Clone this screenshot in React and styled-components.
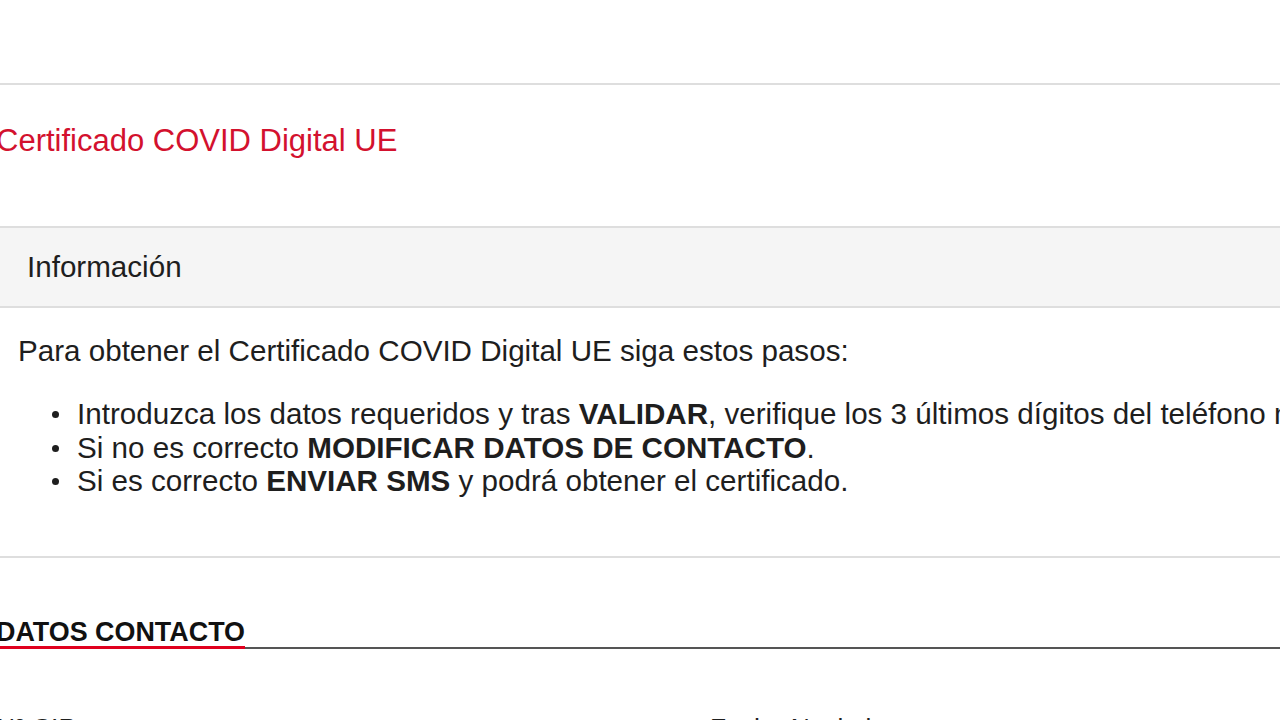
import React from "react";
import styled, { createGlobalStyle } from "styled-components";

const Global = createGlobalStyle`
  html, body { margin: 0; padding: 0; background: #fff; overflow: hidden; }
  body { font-family: "Liberation Sans", Arial, Helvetica, sans-serif; color: #222; }
  * { box-sizing: border-box; }
`;

const Page = styled.div`
  width: 1320px;
  margin-left: -4px;
`;

const TopBar = styled.header`
  height: 85px;
  border-bottom: 2px solid #dedede;
`;

const Title = styled.h1`
  margin: 40px 0 0;
  font-size: 31px;
  line-height: 31px;
  font-weight: 400;
  color: #d3112e;
`;

const Panel = styled.section`
  margin-top: 70px;
  border-top: 2px solid #dedede;
  border-bottom: 2px solid #dedede;
`;

const PanelHeader = styled.div`
  height: 80px;
  display: flex;
  align-items: center;
  padding-left: 31px;
  background: #f5f5f5;
  border-bottom: 2px solid #dedede;
  font-size: 29.6px;
  color: #1e1e1e;
`;

const PanelBody = styled.div`
  padding: 26px 0 58px 22px;
  font-size: 29.6px;
  color: #1e1e1e;
`;

const Lead = styled.p`
  margin: 0;
  line-height: 34px;
`;

const Steps = styled.ul`
  list-style: none;
  margin: 29px 0 0;
  padding: 0 0 0 34px;
`;

const Step = styled.li`
  display: grid;
  grid-template-columns: 25px 1fr;
  align-items: center;
  line-height: 33.5px;
  white-space: nowrap;
`;

const Dot = styled.span`
  width: 7px;
  height: 7px;
  border-radius: 50%;
  background: #1e1e1e;
  margin-top: 2px;
`;

const SectionHead = styled.div`
  margin-top: 61px;
  border-bottom: 2px solid #555;
`;

const SectionTitle = styled.h2`
  display: inline-block;
  margin: 0 0 -2px;
  padding-bottom: 1px;
  font-size: 26.9px;
  line-height: 26.4px;
  font-weight: 700;
  color: #111;
  border-bottom: 3px solid #e0001e;
`;

const Fields = styled.div`
  display: grid;
  grid-template-columns: 714px 1fr;
  margin-top: 66px;
`;

const Label = styled.label`
  font-size: 26.4px;
  line-height: 26.4px;
  color: #1e1e1e;
`;

export default function App() {
  return (
    <>
      <Global />
      <Page>
        <TopBar />
        <Title>Certificado COVID Digital UE</Title>
        <Panel>
          <PanelHeader>Información</PanelHeader>
          <PanelBody>
            <Lead>Para obtener el Certificado COVID Digital UE siga estos pasos:</Lead>
            <Steps>
              <Step>
                <Dot />
                <span>
                  Introduzca los datos requeridos y tras <b>VALIDAR</b>, verifique los 3 últimos dígitos del teléfono móvil.
                </span>
              </Step>
              <Step>
                <Dot />
                <span>
                  Si no es correcto <b>MODIFICAR DATOS DE CONTACTO</b>.
                </span>
              </Step>
              <Step>
                <Dot />
                <span>
                  Si es correcto <b>ENVIAR SMS</b> y podrá obtener el certificado.
                </span>
              </Step>
            </Steps>
          </PanelBody>
        </Panel>
        <SectionHead>
          <SectionTitle>DATOS CONTACTO</SectionTitle>
        </SectionHead>
        <Fields>
          <Label>Nº CIP:</Label>
          <Label>Fecha Nacimiento:</Label>
        </Fields>
      </Page>
    </>
  );
}
